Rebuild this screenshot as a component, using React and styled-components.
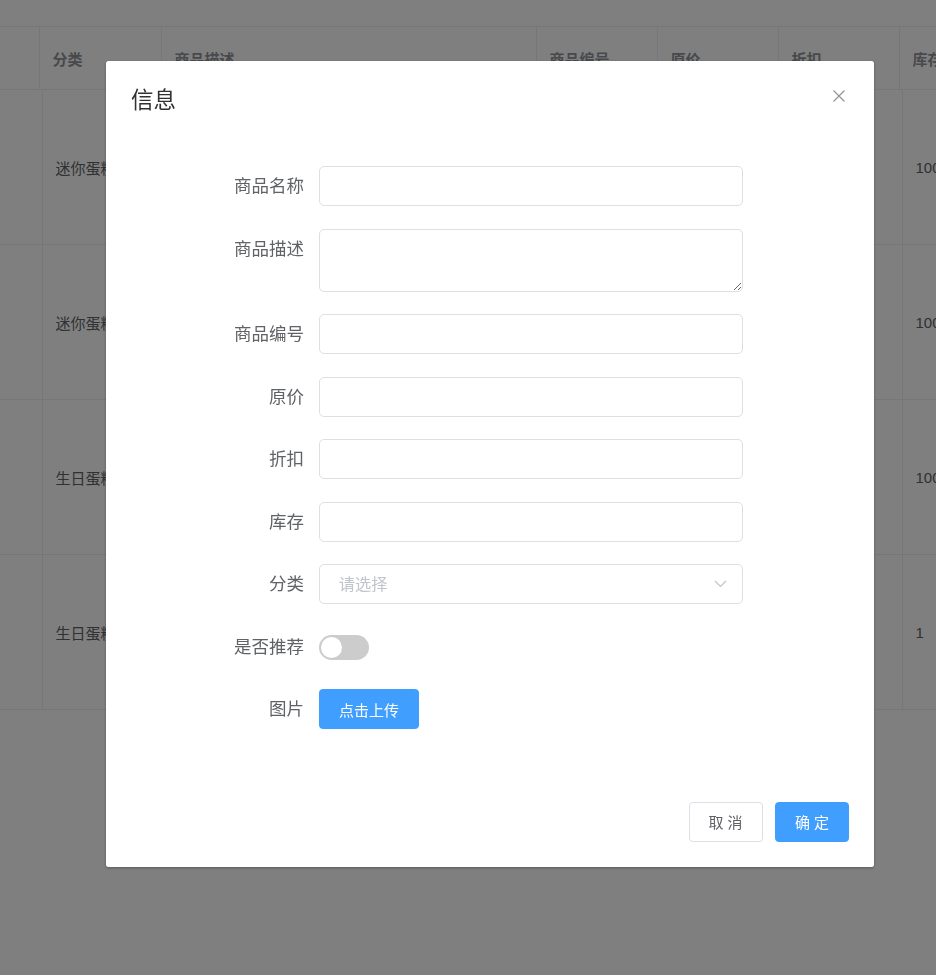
import React, { useState } from 'react'
import styled, { createGlobalStyle } from 'styled-components'

const GlobalStyle = createGlobalStyle`
  html, body {
    margin: 0;
    padding: 0;
    background: #fff;
    font-family: "Helvetica Neue", "Liberation Sans", "Noto Sans CJK SC", sans-serif;
  }
  * { box-sizing: border-box; }
`

const headCols = [40, 122, 375, 121, 121, 121, 121]
const bodyCols = [43, 122, 375, 121, 121, 121, 121]
const headers = ['', '分类', '商品描述', '商品编号', '原价', '折扣', '库存']
const rows = [
  { cat: '迷你蛋糕', stock: '1000' },
  { cat: '迷你蛋糕', stock: '1000' },
  { cat: '生日蛋糕', stock: '1000' },
  { cat: '生日蛋糕', stock: '1' },
]

const fields = [
  { label: '商品名称', type: 'input' },
  { label: '商品描述', type: 'textarea' },
  { label: '商品编号', type: 'input' },
  { label: '原价', type: 'input' },
  { label: '折扣', type: 'input' },
  { label: '库存', type: 'input' },
  { label: '分类', type: 'select' },
  { label: '是否推荐', type: 'switch' },
  { label: '图片', type: 'upload' },
]

const ChevronDown = () => (
  <svg width="13" height="8" viewBox="0 0 13 8" fill="none">
    <path d="M1 1l5.5 5.5L12 1" stroke="#c0c4cc" strokeWidth="1.2" />
  </svg>
)

const CloseIcon = () => (
  <svg width="14" height="14" viewBox="0 0 14 14" fill="none">
    <path d="M1.5 1.5l11 11M12.5 1.5l-11 11" stroke="#909399" strokeWidth="1.2" />
  </svg>
)

const App = () => {
  const [recommend, setrecommend] = useState(false)

  const renderControl = (type) => {
    if (type === 'textarea') return <TextArea />
    if (type === 'select') {
      return (
        <SelectBox>
          <Input readOnly placeholder="请选择" />
          <ArrowWrap><ChevronDown /></ArrowWrap>
        </SelectBox>
      )
    }
    if (type === 'switch') {
      return (
        <SwitchRow>
          <Switch $on={recommend} onClick={() => setrecommend((c) => !c)} />
        </SwitchRow>
      )
    }
    if (type === 'upload') return <Button $primary $width={100}>点击上传</Button>
    return <Input />
  }

  return (
    <>
      <GlobalStyle />
      <Page>
        <Table>
          <HeadRow>
            {headers.map((h, i) => (
              <HeadCell key={i} $w={headCols[i]}>{h}</HeadCell>
            ))}
          </HeadRow>
          {rows.map((r, i) => (
            <BodyRow key={i}>
              {bodyCols.map((w, j) => (
                <BodyCell key={j} $w={w}>
                  {j === 1 ? r.cat : j === 6 ? r.stock : ''}
                </BodyCell>
              ))}
            </BodyRow>
          ))}
        </Table>
      </Page>

      <Mask />
      <DialogWrapper>
        <Dialog>
          <DialogHeader>
            <Title>信息</Title>
            <CloseBtn><CloseIcon /></CloseBtn>
          </DialogHeader>
          <DialogBody>
            {fields.map((f) => (
              <FormItem key={f.label}>
                <Label>{f.label}</Label>
                <Content>{renderControl(f.type)}</Content>
              </FormItem>
            ))}
          </DialogBody>
          <DialogFooter>
            <Button $width={74}>取 消</Button>
            <Button $primary $width={74}>确 定</Button>
          </DialogFooter>
        </Dialog>
      </DialogWrapper>
    </>
  )
}

export default App

const Page = styled.div`
  padding-top: 26px;
  height: 975px;
  width: 936px;
  overflow: hidden;
`

const Table = styled.div`
  width: 1100px;
`

const HeadRow = styled.div`
  display: flex;
  height: 64px;
  border-top: 1px solid #ebeef5;
  border-bottom: 1px solid #ebeef5;
`

const HeadCell = styled.div`
  flex: 0 0 ${(p) => p.$w}px;
  border-right: 1px solid #ebeef5;
  padding: 0 12.5px;
  display: flex;
  align-items: center;
  font-size: 15px;
  font-weight: bold;
  color: #909399;
  white-space: nowrap;
  overflow: hidden;
`

const BodyRow = styled.div`
  display: flex;
  height: 155px;
  border-bottom: 1px solid #ebeef5;
`

const BodyCell = styled.div`
  flex: 0 0 ${(p) => p.$w}px;
  border-right: 1px solid #ebeef5;
  padding: 0 12.5px;
  display: flex;
  align-items: center;
  font-size: 15px;
  color: #606266;
  white-space: nowrap;
  overflow: hidden;
`

const Mask = styled.div`
  position: fixed;
  inset: 0;
  background: rgba(0, 0, 0, 0.5);
  z-index: 10;
`

const DialogWrapper = styled.div`
  position: fixed;
  inset: 0;
  z-index: 11;
  overflow: auto;
  padding: 61px 0 0 106px;
`

const Dialog = styled.div`
  width: 768px;
  background: #fff;
  border-radius: 2.5px;
  box-shadow: 0 1px 3px rgba(0, 0, 0, 0.3);
`

const DialogHeader = styled.div`
  display: flex;
  justify-content: space-between;
  align-items: flex-start;
  padding: 25px 25px 12.5px;
`

const Title = styled.span`
  font-size: 22.5px;
  line-height: 30px;
  color: #303133;
`

const CloseBtn = styled.button`
  width: 20px;
  height: 20px;
  padding: 0;
  border: none;
  background: transparent;
  display: flex;
  align-items: center;
  justify-content: center;
  cursor: pointer;
`

const DialogBody = styled.div`
  padding: 37.5px 25px;
`

const FormItem = styled.div`
  display: flex;
  margin-bottom: 22.5px;
`

const Label = styled.label`
  flex: 0 0 188px;
  text-align: right;
  padding-right: 15px;
  font-size: 17.5px;
  line-height: 40px;
  color: #606266;
`

const Content = styled.div`
  width: 424px;
  display: flex;
`

const Input = styled.input`
  width: 100%;
  height: 40px;
  border: 1px solid #dcdfe6;
  border-radius: 5px;
  padding: 0 18.75px;
  font-size: 16.25px;
  font-family: inherit;
  color: #606266;
  outline: none;
  background: #fff;
  &::placeholder { color: #c0c4cc; }
`

const TextArea = styled.textarea`
  display: block;
  width: 100%;
  height: 63px;
  border: 1px solid #dcdfe6;
  border-radius: 5px;
  padding: 6.25px 18.75px;
  font-size: 16.25px;
  font-family: inherit;
  resize: vertical;
  outline: none;
`

const SelectBox = styled.div`
  position: relative;
  width: 100%;
  display: flex;
`

const ArrowWrap = styled.span`
  position: absolute;
  right: 16px;
  top: 0;
  height: 40px;
  display: flex;
  align-items: center;
`

const SwitchRow = styled.div`
  height: 40px;
  display: flex;
  align-items: center;
  padding-top: 2px;
`

const Switch = styled.span`
  position: relative;
  width: 50px;
  height: 25px;
  border-radius: 12.5px;
  background: ${(p) => (p.$on ? '#409eff' : '#cccccc')};
  cursor: pointer;
  &::after {
    content: '';
    position: absolute;
    top: 2px;
    left: ${(p) => (p.$on ? '27px' : '2px')};
    width: 21px;
    height: 21px;
    border-radius: 50%;
    background: #fff;
  }
`

const Button = styled.button`
  width: ${(p) => p.$width}px;
  height: 40px;
  border-radius: 3.75px;
  border: 1px solid ${(p) => (p.$primary ? '#409eff' : '#dcdfe6')};
  background: ${(p) => (p.$primary ? '#409eff' : '#fff')};
  color: ${(p) => (p.$primary ? '#fff' : '#606266')};
  font-size: 15px;
  font-family: inherit;
  padding: 0;
  white-space: pre;
  cursor: pointer;
`

const DialogFooter = styled.div`
  display: flex;
  justify-content: flex-end;
  gap: 12.5px;
  padding: 12.5px 25px 25px;
`
